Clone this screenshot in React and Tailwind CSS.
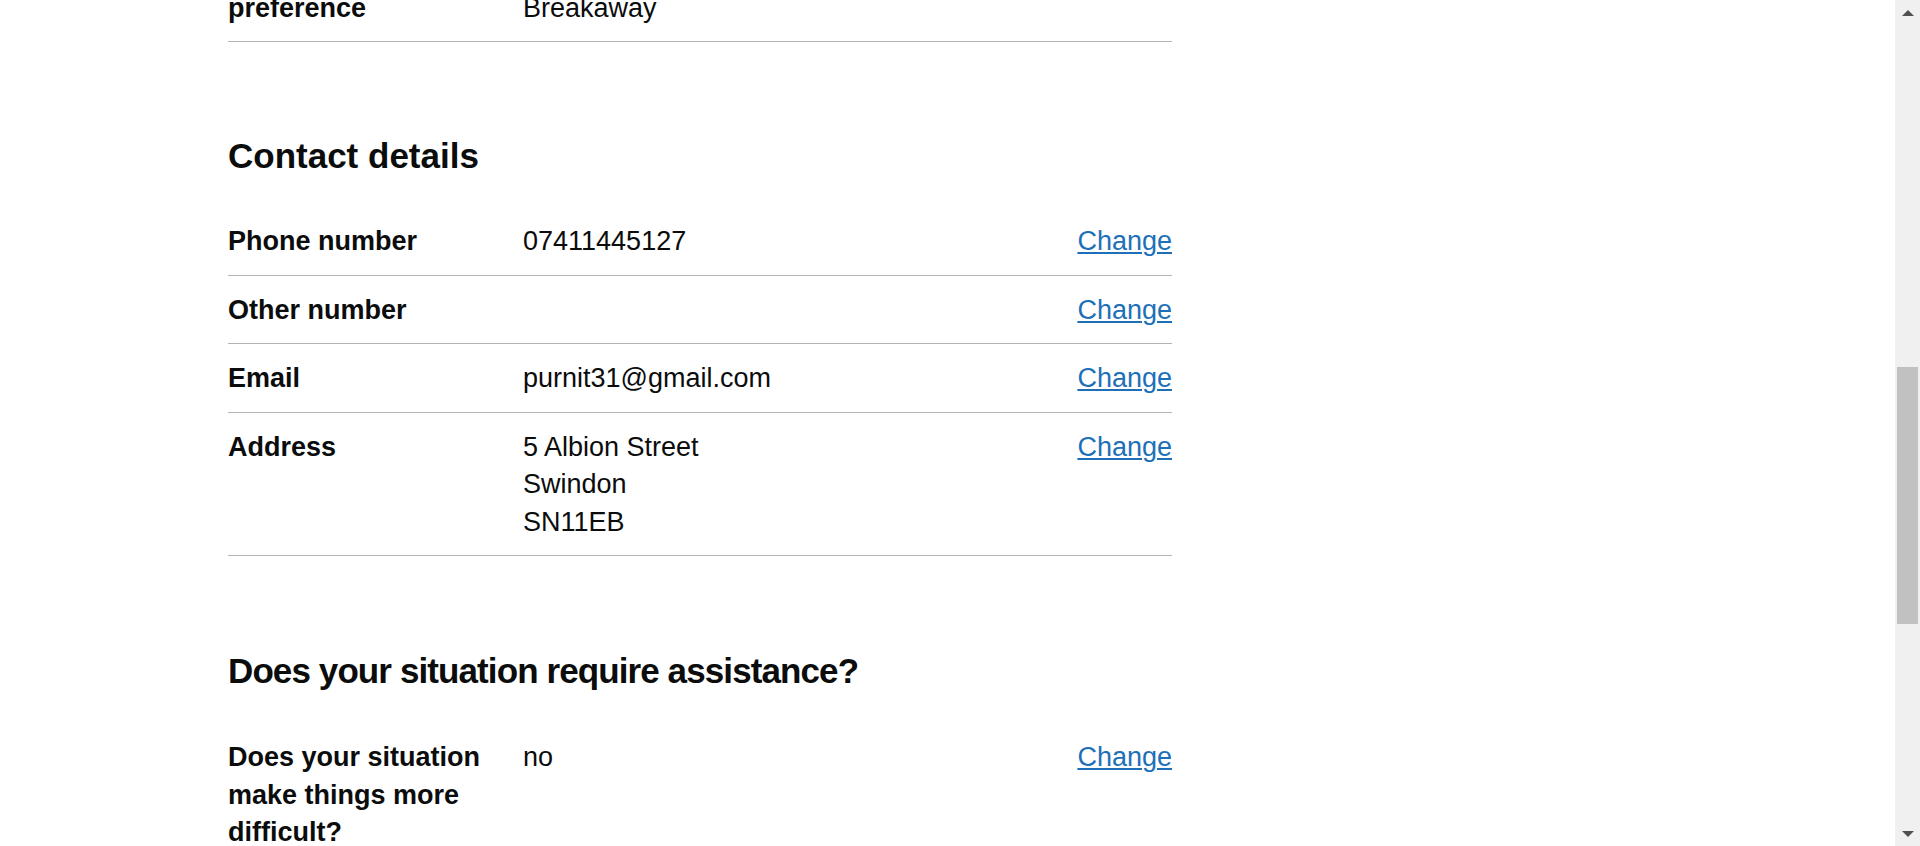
const contactRows = [
  { label: "Phone number", value: ["07411445127"] },
  { label: "Other number", value: [] },
  { label: "Email", value: ["purnit31@gmail.com"] },
  { label: "Address", value: ["5 Albion Street", "Swindon", "SN11EB"] },
];

const assistanceRows = [
  { label: "Does your situation make things more difficult?", value: ["no"] },
];

export default function App() {
  return (
    <div
      className="flex h-screen w-full overflow-hidden bg-white text-[#0b0c0c]"
      style={{ fontFamily: '"Liberation Sans", Arial, sans-serif' }}
    >
      <main className="flex-1 overflow-hidden pl-[228px]">
        <div className="-mt-[64px] w-[944px]">
          <SummaryRow
            label="Programme preference"
            value={["Monday evening", "Breakaway"]}
          />

          <h2 className="mt-[91px] mb-[29px] text-[35px] font-bold leading-[45px]">
            Contact details
          </h2>

          <div>
            {contactRows.map((row, index) => (
              <SummaryRow key={index} label={row.label} value={row.value} />
            ))}
          </div>

          <h2 className="mt-[92px] mb-[30px] text-[35px] font-bold leading-[45px] tracking-[-0.9px]">
            Does your situation require assistance?
          </h2>

          <div>
            {assistanceRows.map((row, index) => (
              <SummaryRow key={index} label={row.label} value={row.value} />
            ))}
          </div>
        </div>
      </main>

      <Scrollbar />
    </div>
  );
}

function SummaryRow({ label, value }) {
  return (
    <div className="flex border-b border-[#b1b4b6] pt-[16px] pb-[14px] text-[27px] leading-[37.5px]">
      <div className="w-[295px] shrink-0 pr-[30px] font-bold">{label}</div>
      <div className="flex-1 pr-[30px]">
        {value.map((line, index) => (
          <p key={index}>{line}</p>
        ))}
      </div>
      <div className="shrink-0 text-right">
        <a
          href="#"
          className="text-[#1d70b8] underline decoration-[2px] underline-offset-[2px]"
        >
          Change
        </a>
      </div>
    </div>
  );
}

function Scrollbar() {
  return (
    <div className="flex h-full w-[25px] shrink-0 flex-col items-center bg-[#f0f0f0]">
      <div className="flex h-[25px] w-full items-center justify-center">
        <svg width="12" height="6" viewBox="0 0 12 6">
          <path d="M0 6 L6 0 L12 6 Z" fill="#505050" />
        </svg>
      </div>
      <div className="h-[342px]" />
      <div className="h-[257px] w-[21px] bg-[#c1c1c1]" />
      <div className="flex-1" />
      <div className="flex h-[25px] w-full items-center justify-center">
        <svg width="12" height="6" viewBox="0 0 12 6">
          <path d="M0 0 L12 0 L6 6 Z" fill="#505050" />
        </svg>
      </div>
    </div>
  );
}
